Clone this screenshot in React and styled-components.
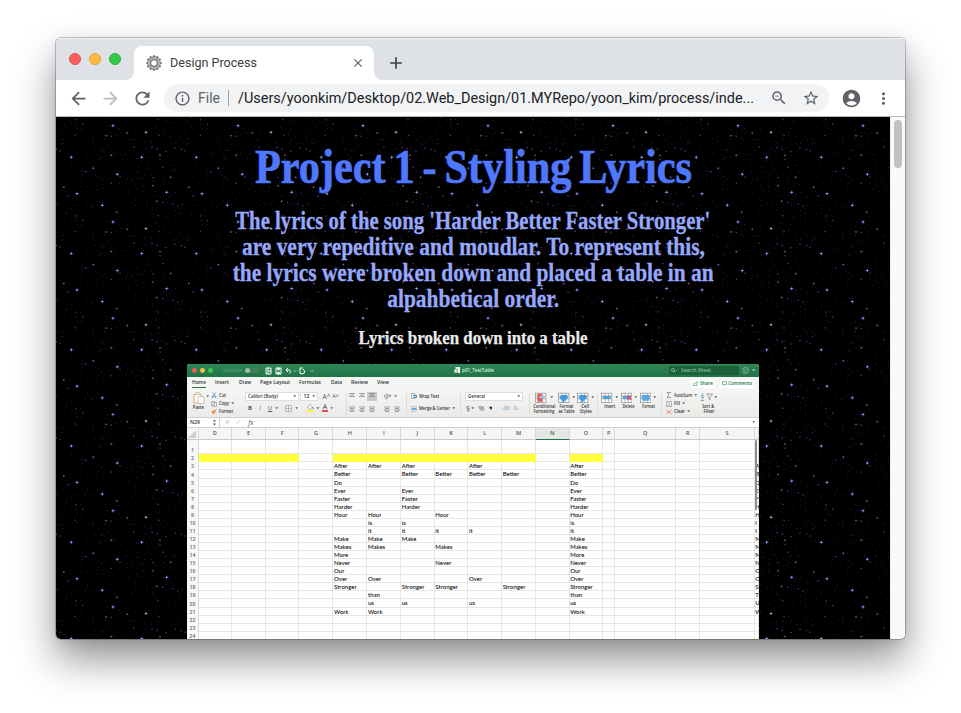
import React, { useLayoutEffect, useRef } from 'react';
import styled, { createGlobalStyle } from 'styled-components';
import {
  MdArrowBack, MdArrowForward, MdRefresh, MdInfoOutline, MdZoomOut, MdStarBorder,
  MdAccountCircle, MdMoreVert, MdClose, MdAdd,
} from 'react-icons/md';

const Global = createGlobalStyle`
  * { box-sizing: border-box; }
  html, body { margin: 0; background: #fff; overflow: hidden; }
  svg { display: block; flex: none; }
`;

const Desktop = styled.main`
  width: 961px;
  height: 713px;
  padding: 38px 56px 74px;
  overflow: hidden;
  background: #fff;
`;

const Window = styled.section`
  width: 849px;
  height: 601px;
  display: flex;
  flex-direction: column;
  overflow: hidden;
  border-radius: 5px;
  background: #fff;
  box-shadow: 0 0 0 1px rgba(0, 0, 0, 0.22), 0 20px 40px rgba(0, 0, 0, 0.44), 0 3px 12px rgba(0, 0, 0, 0.08);
  font-family: Roboto, sans-serif;
`;

const TabStrip = styled.header`
  height: 42px;
  flex: none;
  display: flex;
  padding-left: 13px;
  background: #dee1e6;
  box-shadow: inset 0 1px #f3f4f6;
`;

const TrafficLights = styled.div`
  display: flex;
  align-items: center;
  gap: 8px;
  width: 65px;
`;

const Light = styled.i`
  width: 12px;
  height: 12px;
  border-radius: 50%;
  background: ${(p) => p.$fill};
  border: 1px solid ${(p) => p.$edge};
`;

const Tab = styled.div`
  position: relative;
  width: 240px;
  height: 34px;
  margin-top: 8px;
  padding: 0 8px 0 12px;
  display: flex;
  align-items: center;
  border-radius: 8px 8px 0 0;
  background: #fff;
  &::before, &::after {
    content: '';
    position: absolute;
    bottom: 0;
    width: 8px;
    height: 8px;
  }
  &::before { left: -8px; background: radial-gradient(circle at 0 0, transparent 7.5px, #fff 8px); }
  &::after { right: -8px; background: radial-gradient(circle at 100% 0, transparent 7.5px, #fff 8px); }
`;

const TabTitle = styled.span`
  flex: 1;
  margin-left: 8px;
  padding-bottom: 1px;
  font-size: 12.5px;
  color: #3c4043;
`;

const Slot = styled.div`
  width: ${(p) => p.$w || 32}px;
  flex: none;
  display: flex;
  align-items: center;
  justify-content: center;
  color: ${(p) => p.$color || '#5f6368'};
`;

const NewTab = styled(Slot)`
  padding-top: 8px;
  margin-left: 6px;
`;

const Toolbar = styled.nav`
  height: 37px;
  flex: none;
  display: flex;
  align-items: center;
  padding: 0 0 0 6px;
  border-bottom: 1px solid #b3b6b9;
  background: #fff;
`;

const Omnibox = styled.div`
  width: 665px;
  height: 28px;
  margin: 0 6px;
  padding: 0 2px 0 9px;
  display: flex;
  align-items: center;
  border-radius: 14px;
  background: #f1f3f4;
  font-size: 14px;
  color: #5f6368;
`;

const Scheme = styled.span`
  width: 30px;
  margin-left: 7px;
`;

const Divider = styled.i`
  width: 1px;
  height: 16px;
  margin-right: 8.5px;
  background: #9aa0a6;
`;

const Url = styled.span`
  flex: 1;
  color: #202124;
`;

const Viewport = styled.div`
  flex: 1;
  min-height: 0;
  display: flex;
`;

const Page = styled.div`
  position: relative;
  width: 834px;
  padding-top: 20px;
  display: flex;
  flex-direction: column;
  align-items: center;
  overflow: hidden;
  background: #000;
  font-family: 'Liberation Serif', serif;
`;

const Sky = styled.svg`
  position: absolute;
  inset: 0;
`;

const Heading = styled.h1`
  position: relative;
  margin: 0;
  font-size: 49px;
  line-height: 60px;
  font-weight: 700;
  word-spacing: -3px;
  -webkit-text-stroke: 0.7px #5078ff;
  color: #5078ff;
`;

const Intro = styled.h2`
  position: relative;
  margin: 11px 0 15px;
  display: flex;
  flex-direction: column;
  align-items: center;
  font-size: 24.5px;
  line-height: 26px;
  font-weight: 700;
  -webkit-text-stroke: 0.3px #97a8fb;
  color: #97a8fb;
`;

const Caption = styled.h3`
  position: relative;
  margin: 0 0 15px;
  font-size: 18px;
  line-height: 22px;
  font-weight: 700;
  -webkit-text-stroke: 0.25px #ebebeb;
  color: #ebebeb;
`;

const ScrollTrack = styled.div`
  width: 15px;
  padding: 3px 3px 0 3px;
  background: #fafafa;
  border-left: 1px solid #ececec;
`;

const ScrollThumb = styled.div`
  width: 8px;
  height: 48px;
  border-radius: 4px;
  background: #c1c1c1;
`;

const FitBox = styled.span`
  display: inline-flex;
  justify-content: ${(p) => (p.$left ? 'flex-start' : 'center')};
  width: ${(p) => p.$width}px;
  white-space: nowrap;
`;

const FitText = styled.span`
  display: inline-block;
  flex: none;
  transform-origin: ${(p) => (p.$left ? '0 50%' : '50% 50%')};
`;

/* Draws one line of text stretched or condensed to a set width. */
function Fit({ width, left, children }) {
  const ref = useRef(null);
  useLayoutEffect(() => {
    const el = ref.current;
    el.style.transform = 'none';
    const natural = el.getBoundingClientRect().width;
    if (natural) el.style.transform = `scaleX(${width / natural})`;
  }, [width, children]);
  return (
    <FitBox $width={width} $left={left}>
      <FitText ref={ref} $left={left}>{children}</FitText>
    </FitBox>
  );
}

/* ---------- starfield ---------- */

const TILE_W = 125;
const TILE_H = 96.25;
const BRIGHT = [[57, 8.7], [15.3, 40.3], [85.7, 40.3], [61.3, 57.3], [21, 76.7], [110.7, 75.3], [46.3, 88.3]];
const DIM_BLUE = [[37.3, 51.3], [55.3, 38.3], [114.7, 60.3]];
const PINK = [[50, 18.7], [71.3, 16], [97, 68.7], [100.7, 84.3], [7.7, 70.3], [60.7, 95.3], [104, 38.3]];
const PURPLE = [
  [19.3, 18.3], [103, 18.3], [55.3, 19.3], [20, 2.7], [26.7, 7.3], [0.5, 32.3], [55.3, 66.3], [106.7, 85.3],
  [117, 87], [96, 30.5], [101, 32.3], [110, 34.5], [119, 31], [104, 42.5], [107, 50.3], [64, 60], [97, 60.7],
  [12, 79], [102, 2.5], [78, 30], [30, 54.5], [122, 89], [4, 34],
];
const MAROON = [[39, 32.3], [32, 36.3], [43, 42], [70, 54], [46, 62], [76, 63], [6, 27], [116, 27], [114, 80], [95, 24], [81, 72], [88, 62], [36, 90], [49, 22]];

function dust() {
  const dots = [];
  let seed = 7;
  const next = () => {
    seed = (seed * 16807) % 2147483647;
    return seed / 2147483647;
  };
  for (let i = 0; i < 260; i += 1) {
    dots.push([Math.floor(next() * 125), Math.floor(next() * 96), ['#17171c', '#1e1a26', '#121924', '#261c23'][i % 4]]);
  }
  return dots;
}
const DUST = dust();

function Star({ x, y, core, arm, reach }) {
  return (
    <g>
      <path d={`M${x - reach} ${y}h${reach * 2}M${x} ${y - reach}v${reach * 2}`} stroke={arm} strokeWidth="1" />
      <rect x={x - 0.65} y={y - 0.65} width="1.3" height="1.3" fill={core} />
    </g>
  );
}

function Starfield() {
  const tiles = [];
  for (let r = 0; r < 6; r += 1) for (let c = 0; c < 7; c += 1) tiles.push([c * TILE_W, r * TILE_H]);
  return (
    <Sky width="834" height="522" aria-hidden="true">
      <defs>
        <g id="sky-tile">
          {DUST.map(([x, y, f], i) => <rect key={i} x={x} y={y} width="1" height="1" fill={f} />)}
          {MAROON.map(([x, y]) => <rect key={`${x}-${y}`} x={x - 0.5} y={y - 0.5} width="1" height="1" fill="#4c2438" />)}
          {PURPLE.map(([x, y]) => <rect key={`${x}-${y}`} x={x - 0.65} y={y - 0.65} width="1.3" height="1.3" fill="#50349a" />)}
          {PINK.map(([x, y]) => <Star key={`${x}-${y}`} x={x} y={y} core="#9c3f80" arm="#3c1834" reach={1.2} />)}
          {DIM_BLUE.map(([x, y]) => <Star key={`${x}-${y}`} x={x} y={y} core="#526fae" arm="#1e2c50" reach={1.2} />)}
          {BRIGHT.map(([x, y]) => <Star key={`${x}-${y}`} x={x} y={y} core="#9dbdff" arm="#3d578f" reach={1.8} />)}
          <Star x={90} y={15.3} core="#c8c8c8" arm="#626262" reach={1.5} />
        </g>
      </defs>
      {tiles.map(([x, y]) => <use key={`${x}-${y}`} href="#sky-tile" x={x} y={y} />)}
    </Sky>
  );
}

/* ---------- spreadsheet ---------- */

const Sheet = styled.div`
  position: relative;
  width: 571.4px;
  flex: none;
  overflow: hidden;
  border-radius: 3px 3px 0 0;
  background: #fff;
  font-family: 'Open Sans', sans-serif;
  font-size: 5.4px;
  font-weight: 600;
  line-height: 7px;
  color: #333;
`;

const SheetTitle = styled.div`
  height: 13.2px;
  display: grid;
  grid-template-columns: 1fr 60px 1fr;
  align-items: center;
  padding: 0 3px 0 5px;
  background: linear-gradient(#2e8656, #217346);
  color: #dcebe2;
`;

const Cluster = styled.div`
  display: flex;
  align-items: center;
  justify-content: ${(p) => p.$justify || 'flex-start'};
  gap: ${(p) => p.$gap || 0}px;
  margin-left: ${(p) => p.$ml || 0}px;
  height: ${(p) => (p.$h ? `${p.$h}px` : 'auto')};
`;

const Dot = styled.i`
  width: 4.8px;
  height: 4.8px;
  border-radius: 50%;
  background: ${(p) => p.$fill};
`;

const AutoSave = styled.span`
  margin-left: 7px;
  color: #5c9d7a;
`;

const Toggle = styled.i`
  width: 14px;
  height: 5px;
  margin-right: 2px;
  border-radius: 3px;
  background: #417f5c;
  &::before {
    content: '';
    display: block;
    width: 5px;
    height: 5px;
    border-radius: 50%;
    background: #9bbfaa;
  }
`;

const Search = styled.div`
  width: 70px;
  height: 8.6px;
  display: flex;
  align-items: center;
  gap: 3px;
  padding-left: 2px;
  border-radius: 1px;
  background: #1c6239;
  color: #8fbca2;
`;

const RibbonTabs = styled.div`
  height: 12.4px;
  display: flex;
  align-items: center;
  padding: 1px 5px 0 4.7px;
  background: #f5f5f4;
  color: #333;
`;

const RibbonTab = styled.span`
  width: ${(p) => p.$slot}px;
  display: flex;
  > span { border-bottom: 1px solid ${(p) => (p.$active ? '#217346' : 'transparent')}; height: 9px; }
`;

const Action = styled.span`
  height: 8px;
  display: flex;
  align-items: center;
  justify-content: center;
  gap: 1.5px;
  width: ${(p) => p.$w}px;
  margin-left: 5px;
  border-radius: 1px;
  background: #fff;
  color: #217346;
`;

const Ribbon = styled.div`
  height: 28px;
  display: flex;
  background: linear-gradient(#f5f5f4, #eaeae9);
  border-bottom: 1px solid #cfcfcf;
`;

const Group = styled.div`
  width: ${(p) => p.$w}px;
  flex: none;
  display: flex;
  flex-direction: ${(p) => (p.$row ? 'row' : 'column')};
  gap: ${(p) => p.$gap ?? 3.5}px;
  padding: 2.4px 0 0 ${(p) => p.$pl || 0}px;
  background: linear-gradient(#d6d6d6, #d6d6d6) right 3px / ${(p) => (p.$line ? '0.7px' : '0')} 22px no-repeat;
`;

const Tool = styled.div`
  width: ${(p) => p.$w}px;
  display: flex;
  flex-direction: column;
  align-items: center;
  gap: ${(p) => p.$gap ?? 1}px;
  font-size: 4.8px;
  line-height: 4.7px;
  text-align: center;
  white-space: nowrap;
`;

const SelectBox = styled.span`
  width: ${(p) => p.$w}px;
  height: 9px;
  display: flex;
  align-items: center;
  justify-content: space-between;
  padding: 0 2px;
  background: #fff;
  border: 0.5px solid #dedede;
`;

const Glyph = styled.span`
  width: ${(p) => p.$w || 10}px;
  text-align: center;
  font-weight: ${(p) => (p.$bold ? 700 : 400)};
  font-style: ${(p) => (p.$italic ? 'italic' : 'normal')};
  text-decoration: ${(p) => (p.$underline ? 'underline' : 'none')};
  font-size: ${(p) => p.$size || 6}px;
  color: ${(p) => p.$color || '#555'};
`;

const AlignCell = styled.span`
  width: 10px;
  height: 9px;
  display: grid;
  place-items: center;
  background: ${(p) => (p.$on ? '#c9c9c9' : 'transparent')};
`;

const FormulaBar = styled.div`
  height: 10.4px;
  display: flex;
  align-items: center;
  background: #fff;
  border-bottom: 1px solid #d0d0d0;
`;

const NameBox = styled.span`
  width: 33px;
  height: 100%;
  display: flex;
  align-items: center;
  justify-content: space-between;
  padding: 0 3px;
  border-right: 1px solid #d0d0d0;
`;

const COLUMNS = '11.3px 33.6px 33.6px 33.7px 34px 33.9px 33.8px 33.6px 33.7px 33.7px 33.7px 33.8px 33.8px 11.7px 61.4px 23.8px 54.3px 1fr';

const GridRow = styled.div`
  height: ${(p) => p.$h}px;
  display: grid;
  grid-template-columns: ${COLUMNS};
  grid-template-rows: 100%;
`;

const HeadCell = styled.span`
  display: grid;
  place-items: center;
  min-width: 0;
  overflow: hidden;
  border-right: 0.7px solid #d8d8d8;
  border-bottom: 1px solid ${(p) => (p.$active ? '#217346' : '#c9c9c9')};
  background: ${(p) => (p.$active ? '#e4e6e3' : '#f5f5f5')};
  color: ${(p) => (p.$active ? '#217346' : '#555')};
  font-size: 5.6px;
`;

const RowNumber = styled.span`
  display: flex;
  align-items: flex-end;
  justify-content: center;
  border-right: 1px solid #dadada;
  background: #f8f8f8;
  font-size: 5.2px;
  color: #666;
`;

const Cell = styled.span`
  min-width: 0;
  padding-left: 0.6px;
  white-space: nowrap;
  border-right: 1px solid ${(p) => (p.$fill ? '#ffff3c' : '#e6e6e6')};
  border-bottom: 1px solid ${(p) => (p.$fill ? '#ffff3c' : '#e6e6e6')};
  background: ${(p) => (p.$fill ? '#ffff3c' : '#fff')};
  font-family: Lato, sans-serif;
  font-size: 6px;
  font-weight: 500;
  line-height: 7.4px;
  color: #080808;
`;

const SheetScroll = styled.i`
  position: absolute;
  right: 1.5px;
  top: 76px;
  width: 2px;
  height: 70px;
  border-radius: 1px;
  background: #8d8d8d;
`;

const LETTERS = ['D', 'E', 'F', 'G', 'H', 'I', 'J', 'K', 'L', 'M', 'N', 'O', 'P', 'Q', 'R', 'S', ''];
const WORDS = [
  ['After', 'HIJL'], ['Better', 'HJKLM'], ['Do', 'H'], ['Ever', 'HJ'], ['Faster', 'HJ'], ['Harder', 'HJ'],
  ['Hour', 'HIK'], ['is', 'IJ'], ['it', 'IJKL'], ['Make', 'HIJ'], ['Makes', 'HIK'], ['More', 'H'],
  ['Never', 'HK'], ['Our', 'H'], ['Over', 'HIL'], ['Stronger', 'HJKM'], ['than', 'I'], ['us', 'IJL'], ['Work', 'HI'],
];

function Caret({ color = '#666' }) {
  return <svg width="3.4" height="3" viewBox="0 0 6 4"><path d="M0.5 0h5L3 3.5z" fill={color} /></svg>;
}

function Lines({ low }) {
  return (
    <svg width="6" height="6" viewBox="0 0 12 12" stroke="#777" strokeWidth="1.3">
      <path d={low ? 'M0 2h12M2 5h8M0 8h12M2 11h8' : 'M0 1h12M2 4h8M0 7h12'} />
    </svg>
  );
}

function TableIcon({ accent = '#4a9fdc', mark, size = 10 }) {
  return (
    <svg width={size} height={size} viewBox="0 0 20 20" fill="none">
      <rect x="1" y="2" width="18" height="16" fill="#fff" stroke="#777" />
      <path d="M1 7h18M1 12h18M7 2v16M13 2v16" stroke="#888" />
      <rect x="3" y="7" width="14" height="5" fill={accent} />
      {mark === 'x' && <path d="M11 6l7 8M18 6l-7 8" stroke="#e0444a" strokeWidth="2" />}
      {mark === 'brush' && <path d="M5 5h11v6l-5 5-3 3-1-5-2-1z" fill="#3f9be0" />}
      {mark === 'rules' && <path d="M4 3h8v4H8v4h5v6H4z" fill="#ee5a5a" />}
      {mark === 'tall' && <path d="M4 5h12v10H4z" fill="#58a8e0" />}
    </svg>
  );
}

function CopyIcon() {
  return <svg width="6" height="6" viewBox="0 0 12 12" fill="#fff" stroke="#777"><path d="M1 1h6v8H1zM4 3h7v8H4z" /></svg>;
}

function SpreadsheetTitle() {
  return (
    <SheetTitle>
      <Cluster $gap={3.2}>
        <Dot $fill="#ef5b4f" /><Dot $fill="#f5bd45" /><Dot $fill="#3cc84c" />
        <AutoSave><Fit width={19} left>AutoSave</Fit></AutoSave>
        <Toggle />
        <svg width="50" height="8" viewBox="0 0 50 8" fill="none" stroke="#fff" strokeWidth="1">
          <path d="M1 1h5v6H1zM3 1v6M3 4h3M11 1h5v6h-5z" />
          <path d="M12.500 1h2v2h-2zM12.500 5h2v2h-2z" fill="#fff" strokeWidth="0.500" />
          <path d="M23 1l-2 2 2 2M21 3h3.500q2.500 1 0 3.500M38 1h-3v3M35 4q-1 3 2 3t2.500-3L38 2" />
          <path d="M29 3.500l1 1 1-1M46 3.500l1 1 1-1" strokeWidth="0.800" />
        </svg>
      </Cluster>
      <Cluster $gap={1.5} $justify="center">
        <svg width="6" height="7" viewBox="0 0 12 14"><path d="M3 0h9v12H3z" fill="#fff" /><path d="M0 4h7v8H0z" fill="#d4e8dc" stroke="#217346" /></svg>
        <Fit width={32} left>p01_TextTable</Fit>
      </Cluster>
      <Cluster $gap={3} $justify="flex-end">
        <Search>
          <svg width="7" height="5" viewBox="0 0 14 10" fill="none" stroke="#b5d5c1" strokeWidth="1.300"><circle cx="4" cy="4" r="3" /><path d="M6 6l3 3M10 4l1.500 1.500L13 4" /></svg>
          <Fit width={30} left>Search Sheet</Fit>
        </Search>
        <svg width="7" height="7" viewBox="0 0 14 14" fill="none" stroke="#cfe3d7"><circle cx="7" cy="7" r="6" /><path d="M4 8q3 4 6 0M5 4v2M9 4v2" /></svg>
        <Caret color="#cfe3d7" />
      </Cluster>
    </SheetTitle>
  );
}

const TABS = [['Home', 14, 23], ['Insert', 14, 24.3], ['Draw', 12, 21], ['Page Layout', 30, 39], ['Formulas', 22, 32], ['Data', 11, 20.5], ['Review', 17, 26], ['View', 12, 310]];

function SpreadsheetRibbon() {
  return (
    <>
      <RibbonTabs>
        {TABS.map(([name, w, slot], i) => (
          <RibbonTab key={name} $slot={slot} $active={i === 0}><Fit width={w} left>{name}</Fit></RibbonTab>
        ))}
        <Action $w={24}>
          <svg width="5" height="5" viewBox="0 0 10 10" fill="none" stroke="#217346"><path d="M1 4v5h7V6M3 6q1-4 6-3M7 1l2 2-2 2" /></svg>
          <Fit width={13}>Share</Fit>
        </Action>
        <Action $w={34}>
          <svg width="5" height="5" viewBox="0 0 10 10" fill="none" stroke="#217346"><path d="M1 1h8v6H5L3 9V7H1z" /></svg>
          <Fit width={24}>Comments</Fit>
        </Action>
      </RibbonTabs>
      <Ribbon>
        <Group $w={23.7} $pl={5} $row $gap={1}>
          <Tool $w={13}>
            <svg width="12" height="12" viewBox="0 0 24 24" fill="#fff" stroke="#999"><path d="M2 4h14v18H2z" stroke="#e7a35a" strokeWidth="2" /><path d="M6 1h6v4H6zM10 9h12v14H10z" /></svg>
            <Fit width={11}>Paste</Fit>
          </Tool>
          <Cluster $h={9}><Caret /></Cluster>
        </Group>
        <Group $w={31} $gap={1.1}>
          <Cluster $gap={2}><svg width="6" height="6" viewBox="0 0 12 12" fill="none" stroke="#4385bf" strokeWidth="1.400"><path d="M3 1l5 8M9 1L4 9" /><circle cx="3" cy="10" r="1.500" /><circle cx="9" cy="10" r="1.500" /></svg><Fit width={7} left>Cut</Fit></Cluster>
          <Cluster $gap={2}><CopyIcon /><Fit width={10} left>Copy</Fit><Caret /></Cluster>
          <Cluster $gap={2}><svg width="6" height="6" viewBox="0 0 12 12"><path d="M1 5l5-3 3 5-5 4z" fill="#ec8e43" /><path d="M8 4l3-3" stroke="#666" strokeWidth="2" /></svg><Fit width={14} left>Format</Fit></Cluster>
        </Group>
        <Group $w={104.5} $pl={3} $line>
          <Cluster $gap={1.5}>
            <SelectBox $w={54}><Fit width={30} left>Calibri (Body)</Fit><Caret /></SelectBox>
            <SelectBox $w={18}><span>12</span><Caret /></SelectBox>
            <Cluster $ml={2}><Glyph $w={9} $size={6.5}>A^</Glyph><Glyph $w={9} $size={5.5}>A˅</Glyph></Cluster>
          </Cluster>
          <Cluster>
            <Glyph $bold>B</Glyph><Glyph $italic>I</Glyph><Glyph $underline>U</Glyph><Caret />
            <Cluster $ml={7} $gap={3}><svg width="7" height="7" viewBox="0 0 14 14" fill="none" stroke="#888"><path d="M1 1h12v12H1zM7 1v12M1 7h12" /></svg><Caret /></Cluster>
            <Cluster $ml={7} $gap={2}><svg width="8" height="8" viewBox="0 0 16 16"><path d="M3 6l5-5 5 5-5 5z" fill="#fff" stroke="#666" /><path d="M13 6l2 4" stroke="#458bc7" strokeWidth="2" /><path d="M1 12h14v4H1z" fill="#ffee37" /></svg><Caret /></Cluster>
            <Cluster $ml={3} $gap={2}><svg width="6" height="8" viewBox="0 0 12 16"><path d="M2 10L6 1l4 9M3.500 7h5" fill="none" stroke="#555" strokeWidth="1.500" /><path d="M0 12h12v4H0z" fill="#ef4545" /></svg><Caret /></Cluster>
          </Cluster>
        </Group>
        <Group $w={36} $pl={1}>
          <Cluster><AlignCell><Lines /></AlignCell><AlignCell><Lines /></AlignCell><AlignCell $on><Lines /></AlignCell></Cluster>
          <Cluster><AlignCell><Lines low /></AlignCell><AlignCell><Lines low /></AlignCell><AlignCell><Lines low /></AlignCell></Cluster>
        </Group>
        <Group $w={24.5} $pl={2} $line>
          <Cluster $gap={3} $h={9}><svg width="7" height="7" viewBox="0 0 14 14" fill="none" stroke="#777" strokeWidth="1.500"><path d="M1 5l5-3 2 4-5 4zM4 13L13 4" /><path d="M9 4h4v4" stroke="#3f8fd0" /></svg><Caret /></Cluster>
          <Cluster $gap={4} $h={9}><Lines low /><Lines low /></Cluster>
        </Group>
        <Group $w={54} $pl={4} $line>
          <Cluster $gap={2} $h={9}><svg width="6" height="6" viewBox="0 0 12 12" fill="none" stroke="#777"><path d="M1 1h7v10H1z" /><path d="M4 5h7v4H5" stroke="#3f8fd0" strokeWidth="2" /></svg><Fit width={20} left>Wrap Text</Fit></Cluster>
          <Cluster $gap={2} $h={9}><TableIcon size={6} /><Fit width={31} left>Merge &amp; Center</Fit><Caret /></Cluster>
        </Group>
        <Group $w={69} $pl={4} $line>
          <SelectBox $w={58}><Fit width={17} left>General</Fit><Caret /></SelectBox>
          <Cluster $h={9}>
            <Glyph $w={6} $size={7}>$</Glyph><Caret />
            <Cluster $ml={3} $gap={4}>
              <Glyph $w={8} $size={7}>%</Glyph>
              <svg width="4" height="5" viewBox="0 0 8 10"><path d="M1 3a2.500 2.500 0 1 1 5 1q0 3-4 5 2-2 2-3-3 0-3-3z" fill="#222" /></svg>
            </Cluster>
            <Cluster $ml={7}><Glyph $w={10} $size={4.5} $color="#4684ba">‹.00</Glyph><Glyph $w={10} $size={4.5} $color="#4684ba">.0›</Glyph></Cluster>
          </Cluster>
        </Group>
        <Group $w={67.5} $pl={1.5} $row $gap={0} $line>
          <Tool $w={25} $gap={0.3}><Cluster $gap={3}><TableIcon mark="rules" accent="#9ac7e8" size={11.5} /><Caret /></Cluster><Fit width={22}>Conditional</Fit><Fit width={21}>Formatting</Fit></Tool>
          <Tool $w={20} $gap={0.3}><Cluster $gap={2}><TableIcon mark="brush" size={11.5} /><Caret /></Cluster><Fit width={14}>Format</Fit><Fit width={16}>as Table</Fit></Tool>
          <Tool $w={18} $gap={0.3}><Cluster $gap={2}><TableIcon mark="brush" size={11.5} /><Caret /></Cluster><Fit width={8}>Cell</Fit><Fit width={12}>Styles</Fit></Tool>
        </Group>
        <Group $w={64} $pl={2} $row $gap={0} $line>
          <Tool $w={20} $gap={0.3}><Cluster $gap={2}><TableIcon size={11.5} /><Caret /></Cluster><Fit width={11}>Insert</Fit></Tool>
          <Tool $w={19} $gap={0.3}><Cluster $gap={2}><TableIcon mark="x" size={11.5} /><Caret /></Cluster><Fit width={12}>Delete</Fit></Tool>
          <Tool $w={19} $gap={0.3}><Cluster $gap={2}><TableIcon mark="tall" size={11.5} /><Caret /></Cluster><Fit width={13}>Format</Fit></Tool>
        </Group>
        <Group $w={37} $pl={5} $gap={1.1}>
          <Cluster $gap={2}><svg width="6" height="6" viewBox="0 0 12 12" fill="none" stroke="#777" strokeWidth="1.500"><path d="M10 1H2l4 5-4 5h8" /></svg><Fit width={18} left>AutoSum</Fit><Caret /></Cluster>
          <Cluster $gap={2}><svg width="6" height="6" viewBox="0 0 12 12" fill="none" stroke="#777"><path d="M1 1h10v10H1z" /><path d="M6 3v6M4 7l2 2 2-2" stroke="#3f8fd0" /></svg><Fit width={6} left>Fill</Fit><Caret /></Cluster>
          <Cluster $gap={2}><svg width="6" height="6" viewBox="0 0 12 12" stroke="#ef6b62" strokeWidth="1.500"><path d="M1 2l10 8M11 2L1 10" /></svg><Fit width={11} left>Clear</Fit><Caret /></Cluster>
        </Group>
        <Group $w={24}>
          <Tool $w={20} $gap={0.6}>
            <Cluster $gap={1} $h={11}>
              <Tool $w={5} $gap={0}><Glyph $w={5} $size={5.5} $color="#3f8fd0">A</Glyph><Glyph $w={5} $size={5.5}>Z</Glyph></Tool>
              <svg width="7" height="8" viewBox="0 0 14 16" fill="none" stroke="#777" strokeWidth="1.300"><path d="M1 2h12L8 8v6l-2-2V8z" /></svg><Caret />
            </Cluster>
            <Fit width={12}>Sort &amp;</Fit><Fit width={11}>Filter</Fit>
          </Tool>
        </Group>
      </Ribbon>
      <FormulaBar>
        <NameBox><Fit width={10} left>N29</Fit><svg width="3" height="7" viewBox="0 0 6 14" fill="#555"><path d="M0 5l3-4 3 4zM0 9l3 4 3-4z" /></svg></NameBox>
        <Glyph $w={14} $color="#bbb">✕</Glyph><Glyph $w={9} $color="#bbb">✓</Glyph><Glyph $w={15} $italic $size={6.5}>fx</Glyph>
        <Cluster $ml={494}><Caret /></Cluster>
      </FormulaBar>
    </>
  );
}

function cellText(row, letter) {
  const entry = WORDS[row - 3];
  if (!entry) return '';
  if (letter === '') return entry[0][0].toUpperCase();
  return letter === 'O' || entry[1].includes(letter) ? entry[0] : '';
}

function SpreadsheetGrid() {
  const rows = Array.from({ length: 24 }, (_, i) => i + 1);
  return (
    <>
      <GridRow $h={12}>
        <HeadCell><svg width="9" height="9" viewBox="0 0 9 9"><path d="M8 1v8H0z" fill="#cfcfcf" /></svg></HeadCell>
        {LETTERS.map((l) => <HeadCell key={l || 'edge'} $active={l === 'N'}>{l}</HeadCell>)}
      </GridRow>
      {rows.map((n) => (
        <GridRow key={n} $h={n === 1 ? 14.4 : 8.07}>
          <RowNumber>{n}</RowNumber>
          {LETTERS.map((l) => (
            <Cell key={l || 'edge'} $fill={n === 2 && l !== '' && 'DEFHIJKLMO'.includes(l)}>{cellText(n, l)}</Cell>
          ))}
        </GridRow>
      ))}
    </>
  );
}

function Gear() {
  const teeth = Array.from({ length: 12 }, (_, i) => i * 30);
  return (
    <svg width="16" height="16" viewBox="0 0 16 16">
      {teeth.map((a) => <rect key={a} x="6.900" y="0.200" width="2.200" height="3" rx="0.500" fill="#858585" transform={`rotate(${a} 8 8)`} />)}
      <circle cx="8" cy="8" r="5" fill="none" stroke="#6f6f6f" strokeWidth="3.400" />
      <circle cx="8" cy="8" r="5.100" fill="none" stroke="#b4b4b4" strokeWidth="2" />
      <circle cx="8" cy="8" r="3.300" fill="#fff" stroke="#6f6f6f" strokeWidth="1" />
    </svg>
  );
}

export default function App() {
  return (
    <Desktop>
      <Global />
      <Window>
        <TabStrip>
          <TrafficLights>
            <Light $fill="#fc605c" $edge="#e24b47" />
            <Light $fill="#fdbc40" $edge="#e0a033" />
            <Light $fill="#34c84a" $edge="#29ac3c" />
          </TrafficLights>
          <Tab>
            <Gear />
            <TabTitle><Fit width={87} left>Design Process</Fit></TabTitle>
            <Slot $w={16}><MdClose size={14} /></Slot>
          </Tab>
          <NewTab $color="#3c4043"><MdAdd size={20} /></NewTab>
        </TabStrip>
        <Toolbar>
          <Slot><MdArrowBack size={21} /></Slot>
          <Slot $color="#b9bbbe"><MdArrowForward size={21} /></Slot>
          <Slot><MdRefresh size={21} /></Slot>
          <Omnibox>
            <Slot $w={18}><MdInfoOutline size={17} /></Slot>
            <Scheme><Fit width={22} left>File</Fit></Scheme>
            <Divider />
            <Url><Fit width={516} left>/Users/yoonkim/Desktop/02.Web_Design/01.MYRepo/yoon_kim/process/inde...</Fit></Url>
            <Slot><MdZoomOut size={18} /></Slot>
            <Slot><MdStarBorder size={18} /></Slot>
          </Omnibox>
          <Slot><MdAccountCircle size={21} /></Slot>
          <Slot><MdMoreVert size={19} /></Slot>
        </Toolbar>
        <Viewport>
          <Page>
            <Starfield />
            <Heading><Fit width={437}>Project 1 - Styling Lyrics</Fit></Heading>
            <Intro>
              <Fit width={475}>The lyrics of the song 'Harder Better Faster Stronger'</Fit>
              <Fit width={463}>are very repeditive and moudlar. To represent this,</Fit>
              <Fit width={481}>the lyrics were broken down and placed a table in an</Fit>
              <Fit width={172}>alpahbetical order.</Fit>
            </Intro>
            <Caption><Fit width={229}>Lyrics broken down into a table</Fit></Caption>
            <Sheet>
              <SpreadsheetTitle />
              <SpreadsheetRibbon />
              <SpreadsheetGrid />
              <SheetScroll />
            </Sheet>
          </Page>
          <ScrollTrack><ScrollThumb /></ScrollTrack>
        </Viewport>
      </Window>
    </Desktop>
  );
}
